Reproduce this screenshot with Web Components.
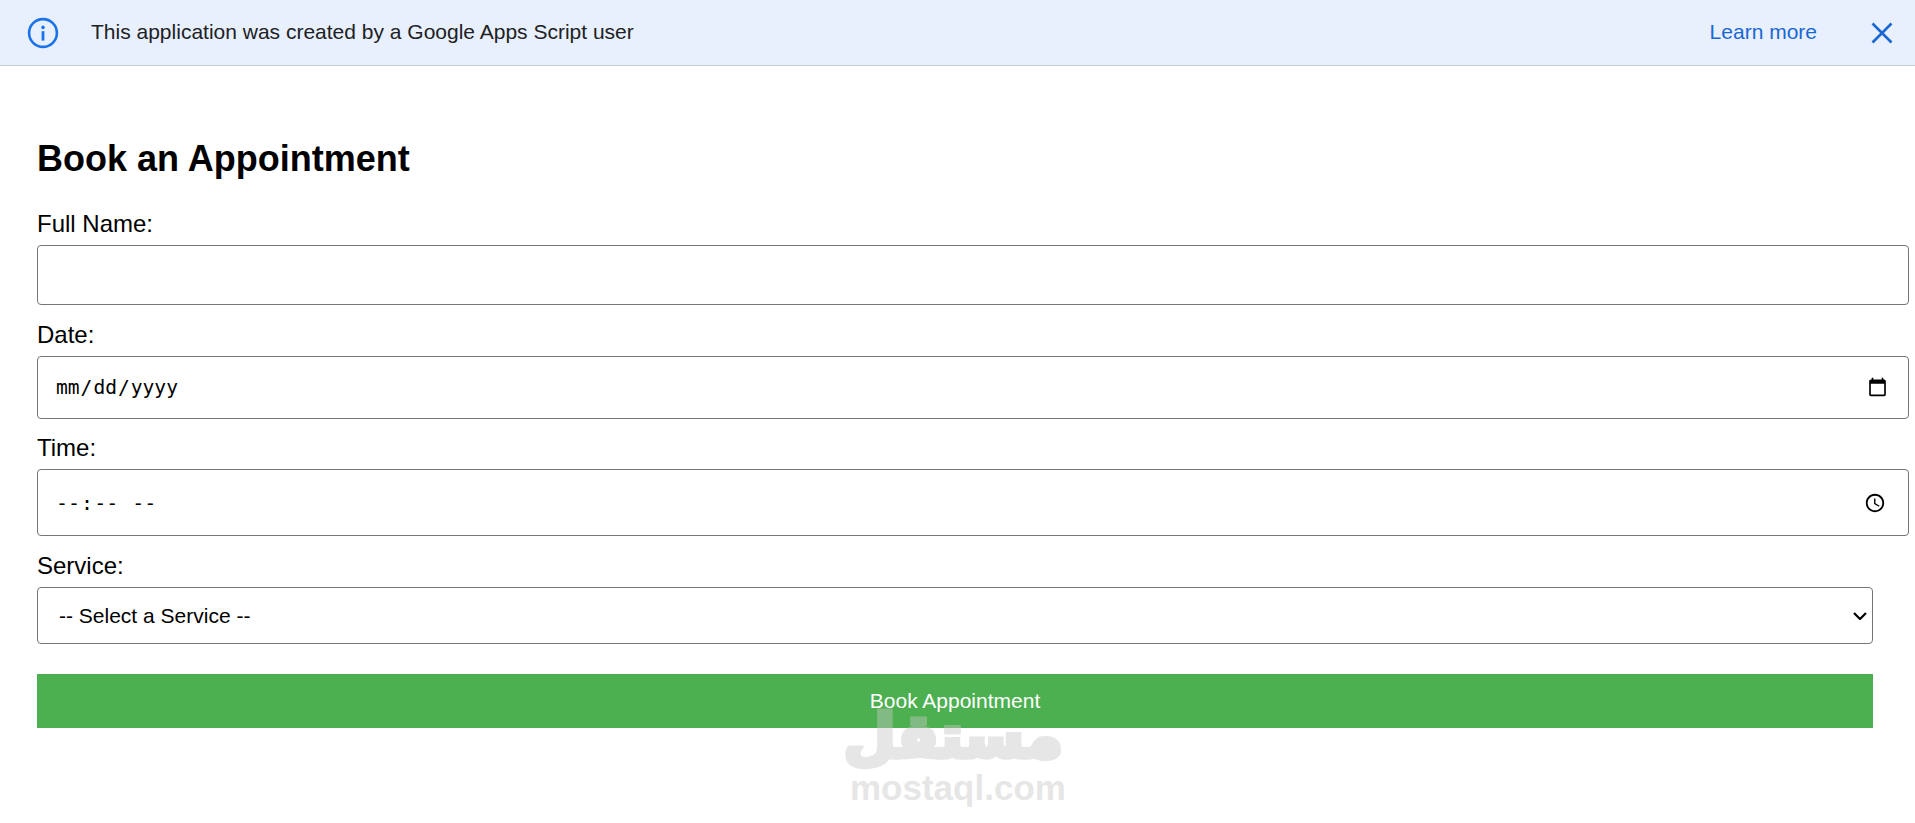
<!DOCTYPE html>
<html lang="en">
<head>
<meta charset="utf-8">
<title>Book an Appointment</title>
<style>
    html, body { margin: 0; background: #fff; }
    body { font-family: "Liberation Sans", Arial, sans-serif; color: #000; }
</style>
</head>
<body>
<app-banner>This application was created by a Google Apps Script user</app-banner>
<booking-form>
    <form-field label="Full Name:" type="text" height="60"></form-field>
    <form-field label="Date:" type="date" height="63"></form-field>
    <form-field label="Time:" type="time" height="67"></form-field>
    <form-field label="Service:" type="select" height="57" placeholder="-- Select a Service --"></form-field>
</booking-form>
<site-watermark></site-watermark>

<script>
class AppBanner extends HTMLElement {
    constructor() {
        super();
        this.attachShadow({ mode: 'open' });
        this.shadowRoot.innerHTML = `
            <style>
                :host {
                    display: flex;
                    align-items: center;
                    height: 65px;
                    background: #e8f0fe;
                    border-bottom: 1px solid #c9ccd1;
                    padding: 0 22px 0 27px;
                    font-size: 21px;
                    color: #202124;
                }
                .info { width: 32px; height: 32px; flex: none; margin-right: 32px; }
                .text { flex: 1; padding-bottom: 2px; }
                a { color: #1a67d2; text-decoration: none; margin-right: 54px; padding-bottom: 2px; }
                .close { width: 22px; height: 22px; flex: none; }
            </style>
            <svg class="info" viewBox="0 0 32 32" fill="none">
                <circle cx="16" cy="16" r="13.9" stroke="#1a73e8" stroke-width="2.6"/>
                <rect x="14.6" y="14.2" width="2.8" height="9.4" fill="#1a73e8"/>
                <circle cx="16" cy="10.4" r="1.8" fill="#1a73e8"/>
            </svg>
            <span class="text"><slot></slot></span>
            <a href="#">Learn more</a>
            <svg class="close" viewBox="0 0 22 22" fill="none">
                <path d="M1.5 1.5 20.5 20.5M20.5 1.5 1.5 20.5" stroke="#1a67d2" stroke-width="2.6"/>
            </svg>
        `;
    }
}

class FormField extends HTMLElement {
    constructor() {
        super();
        this.attachShadow({ mode: 'open' });
    }

    connectedCallback() {
        const type = this.getAttribute('type');
        const h = this.getAttribute('height');
        const control = type === 'select'
            ? `<div class="select-wrap">
                   <select style="height:${h}px"><option>${this.getAttribute('placeholder')}</option></select>
                   <svg viewBox="0 0 14 8" fill="none"><path d="M1 1 7 7 13 1" stroke="#000" stroke-width="2.2"/></svg>
               </div>`
            : `<input type="${type}" style="height:${h - 2}px">`;
        this.shadowRoot.innerHTML = `
            <style>
                :host { display: block; }
                label { display: block; height: 26px; line-height: 26px; font-size: 24px; margin-bottom: 8px; }
                input, select {
                    display: block;
                    width: 100%;
                    margin: 0 0 17px;
                    padding: 0 17px;
                    border: 1px solid #767676;
                    border-radius: 4px;
                    background: #fff;
                    color: #000;
                    font: 20px "DejaVu Sans Mono", monospace;
                }
                input { box-sizing: content-box; }
                input[type="date"] { font-size: 19.6px; margin-bottom: 16px; }
                input::-webkit-calendar-picker-indicator { padding: 0; }
                input[type="date"]::-webkit-calendar-picker-indicator { width: 21px; height: 21px; margin-right: 3px; }
                input[type="time"]::-webkit-calendar-picker-indicator { width: 22px; height: 22px; margin-right: 5px; }
                .select-wrap { position: relative; }
                select {
                    appearance: none;
                    font-family: "Liberation Sans", Arial, sans-serif;
                    font-size: 21px;
                    padding: 0 21px;
                }
                .select-wrap svg {
                    position: absolute;
                    right: 6px;
                    top: 25px;
                    width: 14px;
                    height: 8px;
                    pointer-events: none;
                }
            </style>
            <label>${this.getAttribute('label')}</label>
            ${control}
        `;
    }
}

class BookingForm extends HTMLElement {
    constructor() {
        super();
        this.attachShadow({ mode: 'open' });
        this.shadowRoot.innerHTML = `
            <style>
                :host { display: block; padding: 0 42px 0 37px; }
                h2 { margin: 0; padding-top: 71px; font-size: 36px; line-height: 44px; margin-bottom: 30px; font-weight: bold; }
                button {
                    display: block;
                    width: 100%;
                    height: 54px;
                    margin-top: 30px;
                    border: 0;
                    background: #4caf50;
                    color: #fff;
                    font: 21px "Liberation Sans", Arial, sans-serif;
                }
            </style>
            <h2>Book an Appointment</h2>
            <slot></slot>
            <button type="button">Book Appointment</button>
        `;
    }
}

class SiteWatermark extends HTMLElement {
    constructor() {
        super();
        this.attachShadow({ mode: 'open' });
        this.shadowRoot.innerHTML = `
            <style>
                :host {
                    position: absolute;
                    left: 850px;
                    top: 697px;
                    width: 213px;
                    text-align: center;
                    color: #c8c8c8;
                    opacity: .44;
                    pointer-events: none;
                    font-weight: bold;
                }
                .ar {
                    font: bold 60px/78px "DejaVu Sans", sans-serif;
                    direction: rtl;
                    -webkit-text-stroke: 5px #c8c8c8;
                    white-space: nowrap;
                }
                .en { font: bold 35px/36px "Liberation Sans", Arial, sans-serif; margin-top: -5px; }
            </style>
            <div class="ar">مستقل</div>
            <div class="en">mostaql.com</div>
        `;
    }
}

customElements.define('app-banner', AppBanner);
customElements.define('form-field', FormField);
customElements.define('booking-form', BookingForm);
customElements.define('site-watermark', SiteWatermark);
</script>
</body>
</html>
